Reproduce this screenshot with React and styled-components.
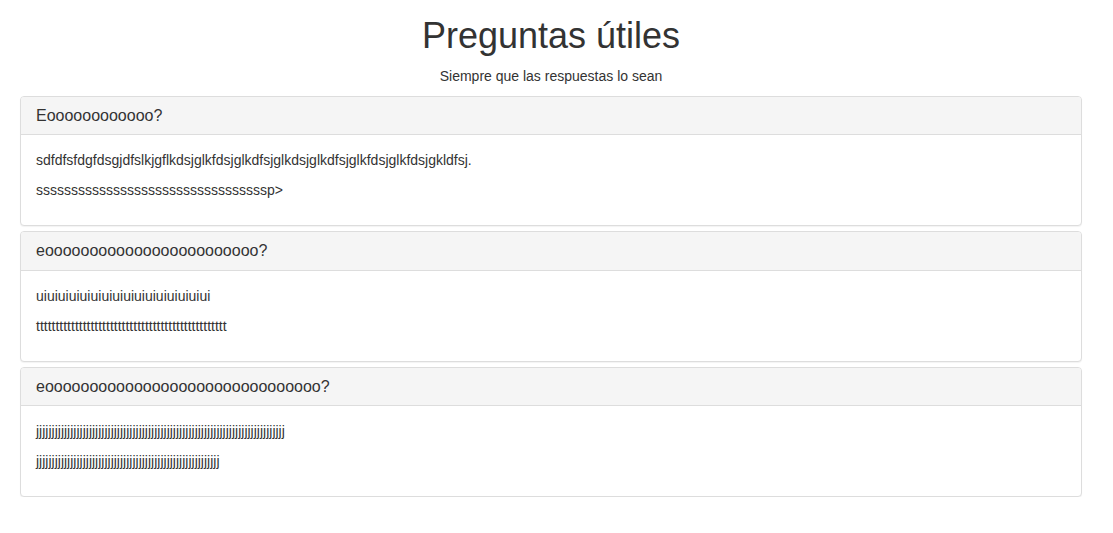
import React from 'react';
import styled, { createGlobalStyle } from 'styled-components';

const GlobalStyle = createGlobalStyle`
  html, body {
    margin: 0;
    padding: 0;
    background: #fff;
  }
  body {
    font-family: "Liberation Sans", Arial, Helvetica, sans-serif;
    font-size: 14px;
    line-height: 1.42857143;
    color: #333;
  }
`;

const Page = styled.div`
  padding: 0 31px 0 20px;
`;

const Title = styled.h1`
  margin: 16px 0 10px;
  font-size: 36px;
  font-weight: 500;
  line-height: 1.1;
  text-align: center;
  color: #333;
`;

const Lead = styled.p`
  margin: 0 0 10px;
  text-align: center;
`;

const PanelGroup = styled.div`
  display: flex;
  flex-direction: column;
  gap: 5px;
`;

const Panel = styled.div`
  background: #fff;
  border: 1px solid #ddd;
  border-radius: 4px;
  box-shadow: 0 1px 1px rgba(0, 0, 0, 0.05);
`;

const PanelHeading = styled.div`
  padding: 10px 15px;
  background: #f5f5f5;
  border-bottom: 1px solid #ddd;
  border-radius: 3px 3px 0 0;
`;

const PanelTitle = styled.h4`
  margin: 0;
  font-size: 16px;
  font-weight: 500;
  line-height: 1.1;
  color: #333;
`;

const PanelBody = styled.div`
  padding: 15px;

  p {
    margin: 0 0 10px;
  }
`;

const faqs = [
  {
    q: 'E' + 'o'.repeat(12) + '?',
    a: [
      'sdfdfsfdgfdsgjdfslkjgflkdsjglkfdsjglkdfsjglkdsjglkdfsjglkfdsjglkfdsjgkldfsj.',
      's'.repeat(33) + 'p>',
    ],
  },
  {
    q: 'e' + 'o'.repeat(24) + '?',
    a: ['ui'.repeat(16), 't'.repeat(49)],
  },
  {
    q: 'e' + 'o'.repeat(31) + '?',
    a: ['j'.repeat(80), 'j'.repeat(59)],
  },
];

export default function App() {
  return (
    <Page>
      <GlobalStyle />
      <Title>Preguntas útiles</Title>
      <Lead>Siempre que las respuestas lo sean</Lead>
      <PanelGroup>
        {faqs.map((f, i) => (
          <Panel key={i}>
            <PanelHeading>
              <PanelTitle>{f.q}</PanelTitle>
            </PanelHeading>
            <PanelBody>
              {f.a.map((line, j) => (
                <p key={j}>{line}</p>
              ))}
            </PanelBody>
          </Panel>
        ))}
      </PanelGroup>
    </Page>
  );
}
